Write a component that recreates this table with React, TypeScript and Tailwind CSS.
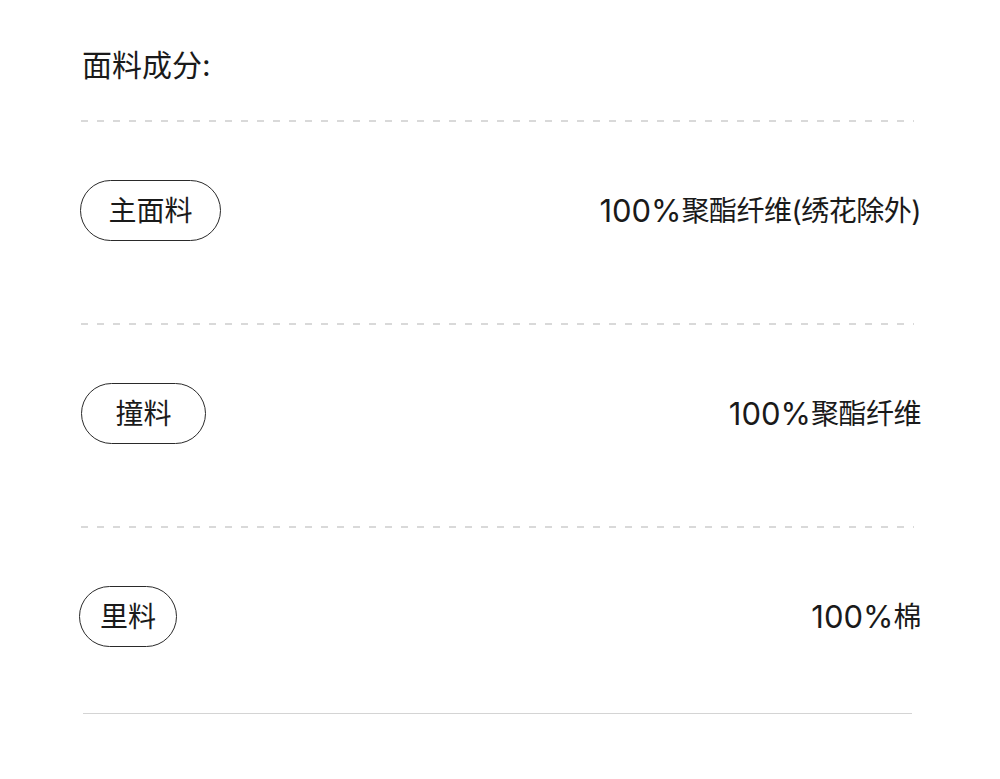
const rows = [
  { label: "主面料", width: "w-[141px]", num: "100%", rest: "聚酯纤维(绣花除外)", offset: "ml-0" },
  { label: "撞料", width: "w-[125px]", num: "100%", rest: "聚酯纤维", offset: "ml-[1px]" },
  { label: "里料", width: "w-[98px]", num: "100%", rest: "棉", offset: "-ml-[1px]" },
];

function Dashed() {
  return (
    <div className="ml-[1px] mr-[6px] h-[2px] bg-[linear-gradient(to_right,#d9d9d9_0,#d9d9d9_7px,transparent_7px)] bg-[length:16px_2px] bg-repeat-x" />
  );
}

export default function App() {
  return (
    <div className="min-h-[779px] w-[1000px] bg-white px-[80px] pt-[45px] font-['Inter','Noto_Sans_CJK_SC',sans-serif] text-[#1a1a1a]">
      <h1 className="ml-[2px] h-[40px] text-[30px] leading-[40px] font-normal">面料成分:</h1>
      <div className="mt-[35px]">
        {rows.map((row) => (
          <div key={row.label}>
            <Dashed />
            <div className="flex h-[201px] items-start justify-between pt-[58px]">
              <div
                className={`${row.width} ${row.offset} flex h-[61px] items-center justify-center rounded-full border border-[#2a2a2a] text-[28px] leading-none`}
              >
                {row.label}
              </div>
              <div className="-mr-[1px] flex h-[61px] items-center text-[28px] leading-none">
                <span className="text-[31px]">{row.num}</span>
                <span className="tracking-[-0.5px]">{row.rest}</span>
              </div>
            </div>
          </div>
        ))}
      </div>
      <div className="-mt-[16px] ml-[3px] mr-[8px] h-px bg-[#d4d4d4]" />
    </div>
  );
}
